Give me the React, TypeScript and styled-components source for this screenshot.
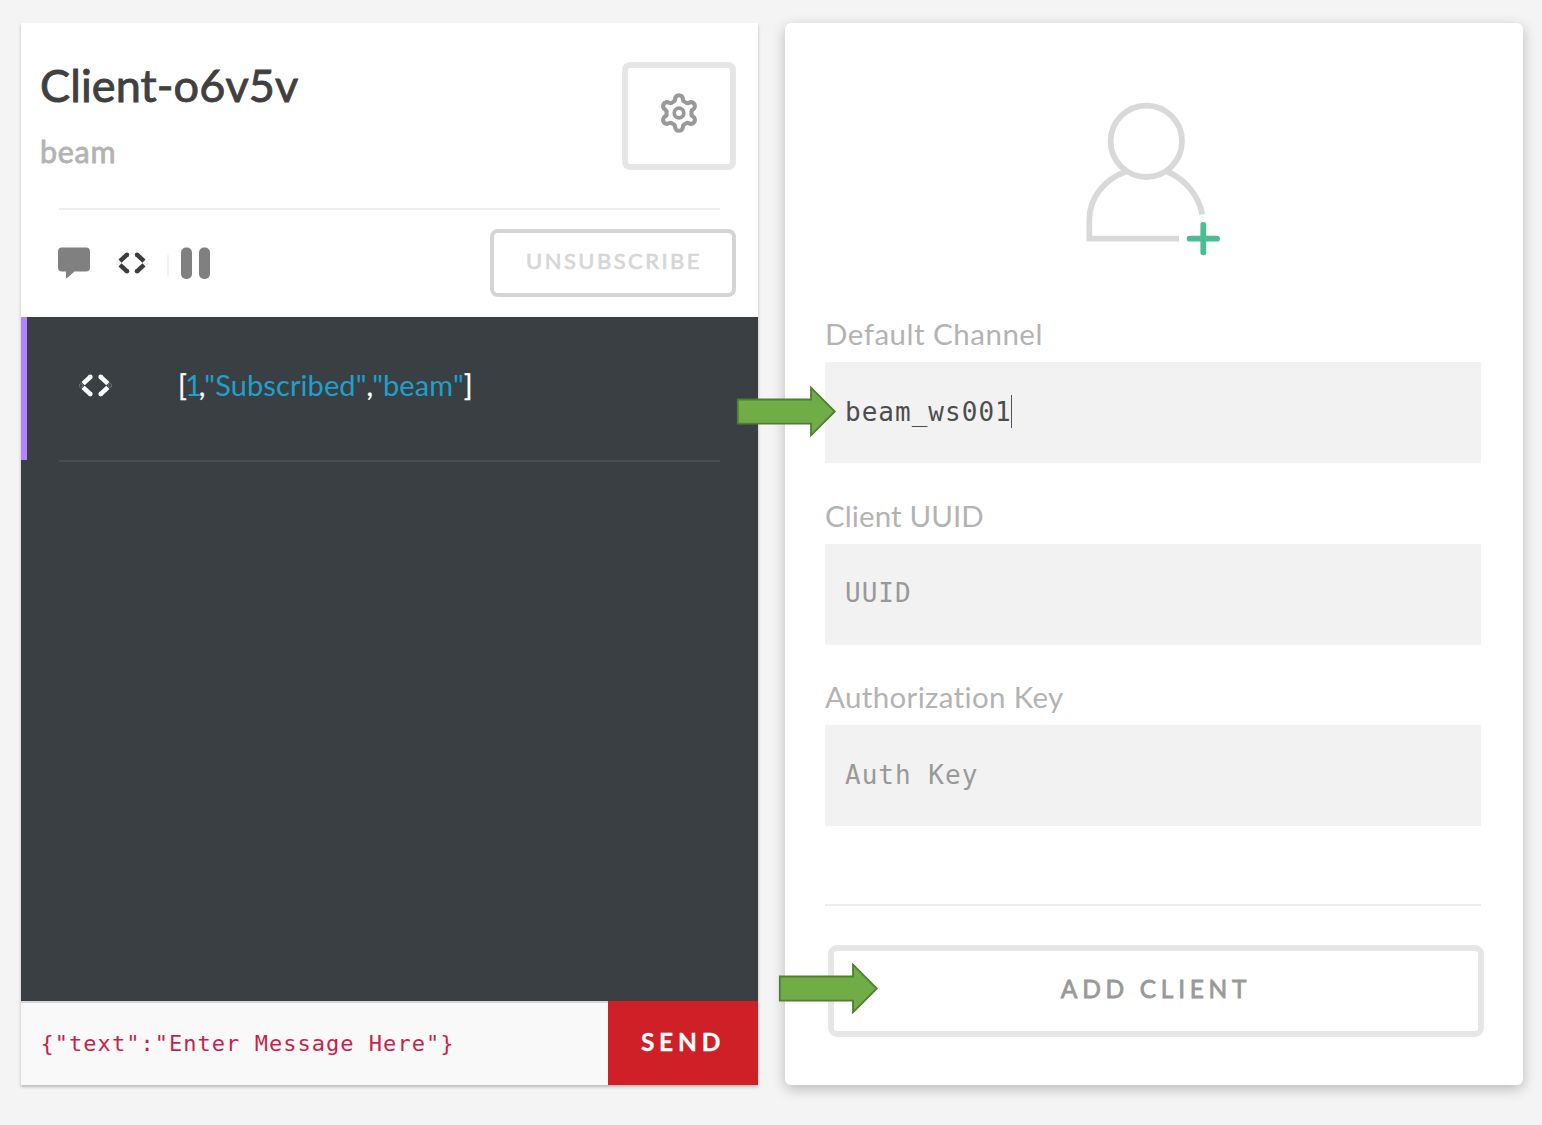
import React from 'react';
import styled, { createGlobalStyle } from 'styled-components';

const GlobalStyle = createGlobalStyle`
  * { box-sizing: border-box; }
  body { margin: 0; background: #f4f4f4; font-family: Lato, 'Open Sans', sans-serif; }
`;

const mono = `'DejaVu Sans Mono', 'Liberation Mono', monospace`;

const Page = styled.main`
  position: relative;
  display: flex;
  gap: 27px;
  width: 1542px;
  height: 1125px;
  padding: 23px 19px 40px 21px;
  overflow: hidden;
  background: #f4f4f4;
`;

const ClientCard = styled.section`
  display: flex;
  flex-direction: column;
  width: 737px;
  height: 1062px;
  background: #fff;
  box-shadow: 0 2px 3px rgba(0, 0, 0, 0.24);
`;

const Header = styled.header`
  display: flex;
  justify-content: space-between;
  height: 185px;
  padding: 39px 22px 0 19px;
`;

const Titles = styled.div`
  display: flex;
  flex-direction: column;
  margin-top: -1px;
`;

const Title = styled.h1`
  margin: 0;
  height: 48px;
  color: #404040;
  font-size: 45px;
  font-weight: 400;
  line-height: 48px;
  letter-spacing: 0.1px;
  white-space: nowrap;
  -webkit-text-stroke: 0.9px #404040;
`;

const Channel = styled.div`
  margin-top: 23px;
  height: 38px;
  color: #b3b3b3;
  font-size: 30.5px;
  line-height: 38px;
  letter-spacing: 0.7px;
  -webkit-text-stroke: 0.8px #b3b3b3;
`;

const SettingsButton = styled.button`
  display: flex;
  justify-content: center;
  width: 114px;
  height: 108px;
  padding: 24px 0 0;
  border: 6px solid #e6e6e6;
  border-radius: 8px;
  background: #fff;
`;

const Rule = styled.hr<{ $tone: string; $thick: number }>`
  flex: none;
  width: 661px;
  height: ${(p) => p.$thick}px;
  margin: 0 0 0 38px;
  border: 0;
  background: ${(p) => p.$tone};
`;

const Toolbar = styled.div`
  display: flex;
  align-items: flex-start;
  justify-content: space-between;
  height: 107px;
  padding: 19px 22px 0 36px;
`;

const Tools = styled.div`
  display: flex;
  align-items: center;
  height: 68px;
`;

const Separator = styled.span`
  width: 2px;
  height: 21px;
  margin: 5px 12px 0 19px;
  background: #f2f2f2;
`;

const CodeSlot = styled.span<{ $left: number; $top?: number }>`
  display: flex;
  align-self: ${(p) => (p.$top ? 'flex-start' : 'center')};
  margin: ${(p) => p.$top ?? 0}px 0 0 ${(p) => p.$left}px;
`;

const Unsubscribe = styled.button`
  width: 246px;
  height: 68px;
  padding: 0 0 5px 2px;
  border: 4px solid #d4d4d4;
  border-radius: 8px;
  background: #fff;
  color: #d6d6d6;
  font: 400 22px Lato, sans-serif;
  letter-spacing: 2.45px;
  -webkit-text-stroke: 0.7px #d6d6d6;
`;

const Log = styled.div`
  height: 684px;
  background: #3a3f43;
`;

const LogItem = styled.div`
  display: flex;
  height: 143px;
  padding: 48px 0 0 52px;
  border-left: 6px solid #b583ff;
`;

const Payload = styled.div`
  margin-left: 66px;
  height: 40px;
  color: #fff;
  font-size: 29px;
  line-height: 39px;
  white-space: nowrap;
  -webkit-text-stroke: 0.3px currentColor;
`;

const Value = styled.span<{ $tight?: boolean }>`
  margin: ${(p) => (p.$tight ? '0 -3px 0 -2px' : '0 0 0 -1px')};
  color: #20a0c9;
  letter-spacing: ${(p) => (p.$tight ? 0 : 0.1)}px;
  -webkit-text-stroke: 0;
`;

const Composer = styled.div`
  display: flex;
  height: 84px;
`;

const Message = styled.div`
  flex: 1;
  height: 84px;
  padding-left: 19.5px;
  border-top: 2px solid #d5d6dc;
  background: #f9f9f9;
  color: #c91f4b;
  font: 22px ${mono};
  line-height: 81px;
  letter-spacing: 1.03px;
  white-space: pre;
`;

const Send = styled.button`
  width: 150px;
  height: 84px;
  padding: 0 0 3px 0;
  border: 0;
  background: #d02027;
  color: #fff;
  font: 700 24.5px Lato, sans-serif;
  letter-spacing: 4.8px;
  -webkit-text-stroke: 0.3px #fff;
`;

const FormCard = styled.section`
  display: flex;
  flex-direction: column;
  width: 738px;
  height: 1062px;
  padding: 75px 39px 0 40px;
  border-radius: 6px;
  background: #fff;
  box-shadow: 0 4px 14px rgba(0, 0, 0, 0.24);
`;

const Portrait = styled.div`
  display: flex;
  justify-content: center;
  height: 217px;
  padding-right: 4px;
`;

const Field = styled.label`
  display: block;
  height: 181.5px;
`;

const FieldName = styled.span<{ $tracking: number }>`
  display: block;
  height: 47px;
  color: #b3b3b3;
  font-size: 29.5px;
  line-height: 38px;
  letter-spacing: ${(p) => p.$tracking}px;
  white-space: nowrap;
`;

const FieldBox = styled.span<{ $filled?: boolean }>`
  display: flex;
  align-items: center;
  width: 656px;
  height: 101px;
  padding: 0 0 2px 20px;
  background: #f2f2f2;
  color: ${(p) => (p.$filled ? '#4d4d4d' : '#999')};
  font: 26px ${mono};
  letter-spacing: 1.02px;
  white-space: pre;
`;

const Caret = styled.span`
  width: 1.5px;
  height: 33px;
  margin-left: -1px;
  background: #555;
`;

const FormRule = styled.hr`
  flex: none;
  width: 656px;
  height: 2px;
  margin: 44.5px 0 0;
  border: 0;
  background: #ebebeb;
`;

const AddButton = styled.button`
  flex: none;
  width: 656px;
  height: 92px;
  margin: 39px 0 0 3px;
  padding: 0 0 5px 0;
  border: 6px solid #e6e6e6;
  border-radius: 9px;
  background: #fff;
  color: #999;
  font: 400 24.5px Lato, sans-serif;
  letter-spacing: 4.7px;
  -webkit-text-stroke: 0.8px #999;
`;

const ArrowMark = styled.svg<{ $x: number; $y: number }>`
  position: absolute;
  left: ${(p) => p.$x}px;
  top: ${(p) => p.$y}px;
`;

function Arrow({ x, y }: { x: number; y: number }) {
  return (
    <ArrowMark $x={x} $y={y} width="102" height="54" viewBox="0 0 102 54">
      <path d="M1.8 14.5H75V2.7L98.8 26.5L75 50.3V38.7H1.8Z" fill="#70ad47" stroke="#507e32" strokeWidth="1.8" />
    </ArrowMark>
  );
}

// One tooth of the gear, repeated every 60 degrees around the hub.
function gearOutline(): string {
  const parts: string[] = [];
  for (let i = 0; i < 6; i += 1) {
    const a = (i * Math.PI) / 3;
    const at = (x: number, y: number) =>
      `${(20 + x * Math.cos(a) - y * Math.sin(a)).toFixed(2)} ${(20 + x * Math.sin(a) + y * Math.cos(a)).toFixed(2)}`;
    parts.push(`${i ? 'L' : 'M'}${at(-6.1, -10.6)}Q${at(-3.8, -11.2)} ${at(-3.8, -13.6)}`);
    parts.push(`A3.8 3.8 0 0 1 ${at(3.8, -13.6)}Q${at(3.8, -11.2)} ${at(6.1, -10.6)}`);
  }
  return `${parts.join('')}Z`;
}

const Gear = () => (
  <svg width="42" height="42" viewBox="-0.5 -0.5 41 41" fill="none" stroke="#999" strokeLinejoin="round">
    <path d={gearOutline()} strokeWidth="4" />
    <circle cx="20" cy="20" r="4.7" strokeWidth="3.6" />
  </svg>
);

const Bubble = () => (
  <svg width="33" height="32" viewBox="0 0 33 32" fill="#808080">
    <path d="M5 0.5H29Q33 0.5 33 4.5V20.5Q33 24.5 29 24.5H17.5L10 31Q9 32 9 30.5V24.5H5Q1 24.5 1 20.5V4.5Q1 0.5 5 0.5Z" />
  </svg>
);

const Code = ({ size, color, halo }: { size: number; color: string; halo: string }) => (
  <svg width={size} height={size} viewBox="0 0 32 32" fill="none">
    <circle cx="1.9" cy="16" r="1.8" stroke={halo} strokeWidth="0.7" />
    <circle cx="30.1" cy="16" r="1.8" stroke={halo} strokeWidth="0.7" />
    <path
      d="M11 7.6L4 14.2M4 17.8L11 24.4M21 7.6L28 14.2M28 17.8L21 24.4"
      stroke={color}
      strokeWidth="4.5"
    />
    <circle cx="11" cy="7.7" r="2.25" fill={color} />
    <circle cx="11" cy="24.3" r="2.25" fill={color} />
    <circle cx="21" cy="7.7" r="2.25" fill={color} />
    <circle cx="21" cy="24.3" r="2.25" fill={color} />
  </svg>
);

const Pause = () => (
  <svg width="30" height="32" viewBox="0 0 30 32" fill="#808080">
    <rect x="0" y="0.5" width="11" height="31.5" rx="5" />
    <rect x="18" y="0.5" width="11" height="31.5" rx="5" />
  </svg>
);

const AddPerson = () => (
  <svg width="140" height="162" viewBox="1083 98 140 162" fill="none" stroke="#d9d9d9" strokeWidth="5.8">
    <circle cx="1146.3" cy="141.3" r="35.7" />
    <path d="M1126 171.5C1104 179.5 1089.3 198 1089.3 220V238.7H1179" />
    <path d="M1167 171.5C1185 179 1198.5 195 1202.3 214.5" />
    <path d="M1203.3 225V252.4M1189.6 238.7H1217" stroke="#4abd94" strokeLinecap="round" />
  </svg>
);

export default function App() {
  return (
    <>
      <GlobalStyle />
      <Page>
        <ClientCard>
          <Header>
            <Titles>
              <Title>Client-o6v5v</Title>
              <Channel>beam</Channel>
            </Titles>
            <SettingsButton aria-label="Settings">
              <Gear />
            </SettingsButton>
          </Header>
          <Rule $tone="#eeeeee" $thick={2} />
          <Toolbar>
            <Tools>
              <Bubble />
              <CodeSlot $left={26}>
                <Code size={32} color="#3d3d3d" halo="#e0e0e0" />
              </CodeSlot>
              <Separator />
              <Pause />
            </Tools>
            <Unsubscribe>UNSUBSCRIBE</Unsubscribe>
          </Toolbar>
          <Log>
            <LogItem>
              <CodeSlot $left={0} $top={4}>
                <Code size={33} color="#ffffff" halo="#85898c" />
              </CodeSlot>
              <Payload>
                [<Value $tight>1</Value>,<Value>"Subscribed"</Value>,<Value>"beam"</Value>]
              </Payload>
            </LogItem>
            <Rule $tone="#484d51" $thick={2} />
          </Log>
          <Composer>
            <Message>{'{"text":"Enter Message Here"}'}</Message>
            <Send>SEND</Send>
          </Composer>
        </ClientCard>

        <FormCard>
          <Portrait>
            <AddPerson />
          </Portrait>
          <Field>
            <FieldName $tracking={0.5}>Default Channel</FieldName>
            <FieldBox $filled>
              beam_ws001
              <Caret />
            </FieldBox>
          </Field>
          <Field>
            <FieldName $tracking={0.1}>Client UUID</FieldName>
            <FieldBox>UUID</FieldBox>
          </Field>
          <Field>
            <FieldName $tracking={0.35}>Authorization Key</FieldName>
            <FieldBox>Auth Key</FieldBox>
          </Field>
          <FormRule />
          <AddButton>ADD CLIENT</AddButton>
        </FormCard>

        <Arrow x={736} y={385} />
        <Arrow x={778} y={962} />
      </Page>
    </>
  );
}
